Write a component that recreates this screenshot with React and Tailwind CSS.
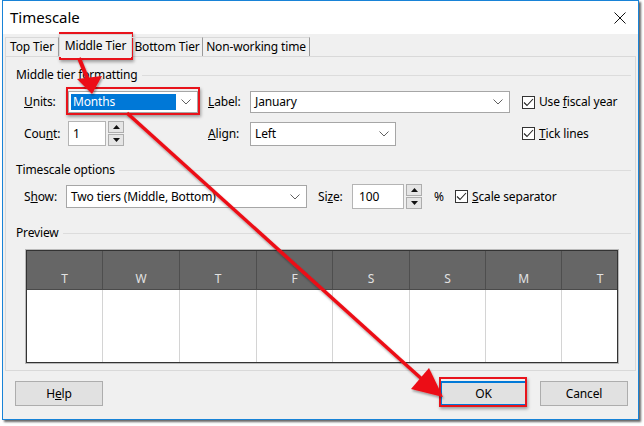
import React from 'react';

const FONT = "font-['Noto_Sans','Open_Sans',sans-serif]";

function Chevron() {
  return (
    <svg width="10" height="6" viewBox="0 0 10 6">
      <path d="M0.5 0.5 L5 5 L9.5 0.5" fill="none" stroke="#606060" strokeWidth="1" />
    </svg>
  );
}

function Combo({ className, children }) {
  return (
    <div className={`flex items-center bg-white border border-[#a6a6a6] ${className}`}>
      <div className="flex-1 min-w-0 flex items-center">{children}</div>
      <div className="pr-[6px] flex items-center">
        <Chevron />
      </div>
    </div>
  );
}

function Spin() {
  return (
    <div className="flex flex-col w-[16px] h-[25px] gap-[1px]">
      <div className="flex-1 bg-[#e5e5e5] border border-[#adadad] flex items-center justify-center">
        <svg width="7" height="4" viewBox="0 0 7 4"><path d="M0 4 L3.5 0 L7 4 Z" fill="#111" /></svg>
      </div>
      <div className="flex-1 bg-[#e5e5e5] border border-[#adadad] flex items-center justify-center">
        <svg width="7" height="4" viewBox="0 0 7 4"><path d="M0 0 L3.5 4 L7 0 Z" fill="#111" /></svg>
      </div>
    </div>
  );
}

function Check({ children }) {
  return (
    <div className="flex items-center gap-[4px]">
      <div className="w-[13px] h-[13px] bg-white border border-[#333] flex items-center justify-center">
        <svg width="11" height="9" viewBox="0 0 11 9">
          <path d="M1 4.5 L4 7.5 L10 1" fill="none" stroke="#222" strokeWidth="1.1" />
        </svg>
      </div>
      <span>{children}</span>
    </div>
  );
}

function Group({ title }) {
  return (
    <div className="flex items-center h-[16px]">
      <span>{title}</span>
      <div className="flex-1 h-px bg-[#dcdcdc] ml-[4px]" />
    </div>
  );
}

const DAYS = ['T', 'W', 'T', 'F', 'S', 'S', 'M', 'T'];

export default function App() {
  return (
    <div className={`relative w-[644px] h-[426px] bg-white overflow-hidden text-[12px] tracking-[-0.15px] text-black ${FONT}`}>
      {/* dialog */}
      <div className="ml-[2px] w-[637px] h-[420px] border border-[#1883d7] flex flex-col shadow-[2px_2px_2px_rgba(0,0,0,0.6)]">
        <div className="h-[33px] bg-white flex items-center justify-between pl-[7px] pr-[12px]">
          <span className="text-[15px] tracking-normal">Timescale</span>
          <svg width="12" height="12" viewBox="0 0 12 12">
            <path d="M0.5 0.5 L11.5 11.5 M11.5 0.5 L0.5 11.5" stroke="#111" strokeWidth="1" />
          </svg>
        </div>

        <div className="flex-1 bg-[#f0f0f0] flex flex-col">
          {/* tabs */}
          <div className="h-[22px] flex items-end pl-[2px] relative z-10">
            <div className="w-[54px] h-[19px] border border-b-0 border-[#d9d9d9] border-r-[#9a9a9a] flex items-center justify-center">Top Tier</div>
            <div className="w-[73px] h-[23px] -mb-px bg-[#f0f0f0] border border-b-0 border-[#d9d9d9] flex items-center justify-center">Middle Tier</div>
            <div className="w-[71px] h-[19px] border border-b-0 border-l-0 border-[#d9d9d9] border-r-[#9a9a9a] flex items-center justify-center">Bottom Tier</div>
            <div className="w-[107px] h-[19px] border border-b-0 border-l-0 border-[#d9d9d9] border-r-[#9a9a9a] flex items-center justify-center">Non-working time</div>
          </div>

          {/* panel */}
          <div className="ml-[2px] w-[631px] h-[315px] border border-[#d9d9d9] pt-[10px] pl-[10px] pr-[4px]">
            <Group title="Middle tier formatting" />

            <div className="mt-[8px] pl-[8px] flex items-center h-[22px]">
              <span className="w-[44px]"><u>U</u>nits:</span>
              <Combo className="w-[130px] h-[22px]">
                <div className="ml-[2px] w-[105px] h-[16px] bg-[#0078d7] text-white pl-[2px] flex items-center">Months</div>
              </Combo>
              <span className="ml-[10px] w-[42px]"><u>L</u>abel:</span>
              <Combo className="w-[260px] h-[22px]">
                <span className="pl-[4px]">January</span>
              </Combo>
              <div className="ml-[12px]"><Check>Use <u>f</u>iscal year</Check></div>
            </div>

            <div className="mt-[8px] pl-[8px] flex items-center h-[25px]">
              <span className="w-[44px]">Cou<u>n</u>t:</span>
              <div className="w-[38px] h-[25px] bg-white border border-[#b4b4b4] flex items-center pl-[4px]">1</div>
              <div className="ml-[2px]"><Spin /></div>
              <span className="ml-[84px] w-[42px]"><u>A</u>lign:</span>
              <Combo className="w-[146px] h-[24px]">
                <span className="pl-[4px]">Left</span>
              </Combo>
              <div className="ml-[126px]"><Check><u>T</u>ick lines</Check></div>
            </div>

            <div className="mt-[16px]"><Group title="Timescale options" /></div>

            <div className="mt-[6px] pl-[8px] flex items-center h-[25px]">
              <span className="w-[42px]">S<u>h</u>ow:</span>
              <Combo className="w-[241px] h-[23px]">
                <span className="pl-[4px]">Two tiers (Middle, Bottom)</span>
              </Combo>
              <span className="ml-[11px] w-[34px]">Si<u>z</u>e:</span>
              <div className="w-[52px] h-[25px] bg-white border border-[#b4b4b4] flex items-center pl-[6px]">100</div>
              <div className="ml-[2px]"><Spin /></div>
              <span className="ml-[12px] w-[10px]">%</span>
              <div className="ml-[11px]"><Check><u>S</u>cale separator</Check></div>
            </div>

            <div className="mt-[16px]"><Group title="Preview" /></div>

            <div className="mt-[8px] ml-[9px] w-[594px] h-[115px] border border-[#b9b9b9]">
              <div className="w-full h-full border border-[#333] flex flex-col overflow-hidden">
                <div className="h-[39px] bg-[#666666] border-b border-[#4a4a4a] grid grid-cols-[76px_77px_77px_76px_77px_76px_76px_77px] overflow-hidden">
                  {DAYS.map((d, i) => (
                    <div key={i} className="border-r border-[#4e4e4e] flex items-end justify-center pb-[1px] text-[#e2e2e2]">{d}</div>
                  ))}
                </div>
                <div className="flex-1 bg-white grid grid-cols-[76px_77px_77px_76px_77px_76px_76px_77px] overflow-hidden">
                  {DAYS.map((d, i) => (
                    <div key={i} className="border-r border-[#d4d4d4]" />
                  ))}
                </div>
              </div>
            </div>
          </div>

          {/* buttons */}
          <div className="mt-[10px] flex items-center pl-[12px]">
            <div className="w-[88px] h-[25px] bg-[#e1e1e1] border border-[#adadad] flex items-center justify-center">H<u>e</u>lp</div>
            <div className="ml-[337px] w-[87px] h-[25px] bg-[#e1e1e1] border-2 border-[#0078d7] flex items-center justify-center">OK</div>
            <div className="ml-[13px] w-[88px] h-[25px] bg-[#e1e1e1] border border-[#adadad] flex items-center justify-center">Cancel</div>
          </div>
        </div>
      </div>

      {/* annotation boxes */}
      <div className="absolute left-[59px] top-[32px] w-[74px] h-[28px] border-2 border-[#e8131b] shadow-[1px_2px_3px_rgba(0,0,0,0.35)]" />
      <div className="absolute left-[66px] top-[87px] w-[134px] h-[28px] border-2 border-[#e8131b] shadow-[1px_2px_3px_rgba(0,0,0,0.35)]" />
      <div className="absolute left-[439px] top-[377px] w-[88px] h-[30px] border-2 border-[#e8131b] shadow-[1px_2px_3px_rgba(0,0,0,0.35)]" />

      {/* annotation arrows */}
      <svg className="absolute left-0 top-0 pointer-events-none" width="644" height="426" viewBox="0 0 644 426">
        <defs>
          <filter id="sh" x="-10%" y="-10%" width="130%" height="130%">
            <feDropShadow dx="1" dy="2" stdDeviation="1.2" floodColor="#000" floodOpacity="0.35" />
          </filter>
        </defs>
        <g filter="url(#sh)" fill="#ec0f16" stroke="#ec0f16">
          <line x1="79" y1="58" x2="88" y2="80" strokeWidth="4" />
          <polygon points="77,79 102,76 92,94" stroke="none" />
          <line x1="127" y1="113" x2="424" y2="381" strokeWidth="3.5" />
          <polygon points="411,389 429,368 443,397" stroke="none" />
        </g>
      </svg>
    </div>
  );
}
